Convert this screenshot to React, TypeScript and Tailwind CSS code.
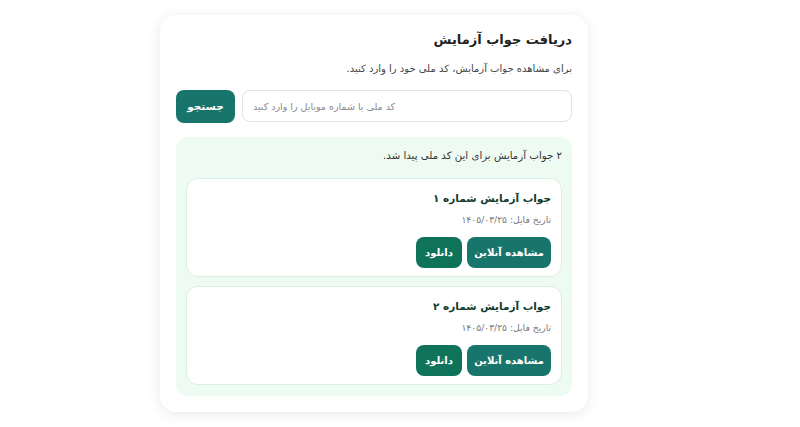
import React from "react";

type Result = { id: number; title: string; date: string };

const results: Result[] = [
  { id: 1, title: "جواب آزمایش شماره ۱", date: "۱۴۰۵/۰۳/۲۵" },
  { id: 2, title: "جواب آزمایش شماره ۲", date: "۱۴۰۵/۰۳/۲۵" },
];

const ResultCard = ({ title, date }: Result) => (
  <div className="rounded-xl border border-[#dcefe5] bg-white px-[10px] pt-[9px] pb-[8px]">
    <h3 className="text-[10.5px] font-bold leading-[20px] text-[#0f3b2c]">{title}</h3>
    <p className="mt-[4px] text-[9.2px] leading-[16px] text-[#777]">تاریخ فایل: {date}</p>
    <div className="mt-[9px] flex gap-[5px]">
      <button className="h-[31px] w-[84px] rounded-lg bg-[#18756c] text-[10px] font-bold text-white">
        مشاهده آنلاین
      </button>
      <button className="h-[31px] w-[46px] rounded-lg bg-[#0e7358] text-[10px] font-bold text-white">
        دانلود
      </button>
    </div>
  </div>
);

export default function App() {
  return (
    <div
      className="min-h-[427px] bg-white pt-[15px] pl-[160px]"
      style={{ fontFamily: '"DejaVu Sans", "Noto Sans", sans-serif' }}
    >
      <div
        dir="rtl"
        className="w-[428px] rounded-2xl bg-white px-[16px] pt-[13px] pb-[16px] shadow-[0_2px_14px_rgba(0,0,0,0.09)]"
      >
        <h1 className="text-[13px] font-bold leading-[24px] text-[#222]">دریافت جواب آزمایش</h1>
        <p className="mt-[8px] text-[10px] leading-[18px] text-[#444]">
          برای مشاهده جواب آزمایش، کد ملی خود را وارد کنید.
        </p>
        <div className="mt-[12px] flex gap-[7px]">
          <input
            className="h-[32px] flex-1 rounded-lg border border-[#e2e2e2] px-[10px] text-left text-[9.5px] text-[#333] placeholder:text-[#888] outline-none"
            placeholder="کد ملی یا شماره موبایل را وارد کنید"
          />
          <button className="h-[33px] w-[59px] rounded-lg bg-[#18756c] text-[10.5px] font-bold text-white">
            جستجو
          </button>
        </div>
        <div className="mt-[14px] rounded-xl bg-[#eefbf3] px-[10px] pt-[10px] pb-[11px]">
          <p className="text-[10.2px] leading-[18px] text-[#333]">۲ جواب آزمایش برای این کد ملی پیدا شد.</p>
          <div className="mt-[13px] flex flex-col gap-[9px]">
            {results.map((r) => (
              <ResultCard key={r.id} {...r} />
            ))}
          </div>
        </div>
      </div>
    </div>
  );
}
